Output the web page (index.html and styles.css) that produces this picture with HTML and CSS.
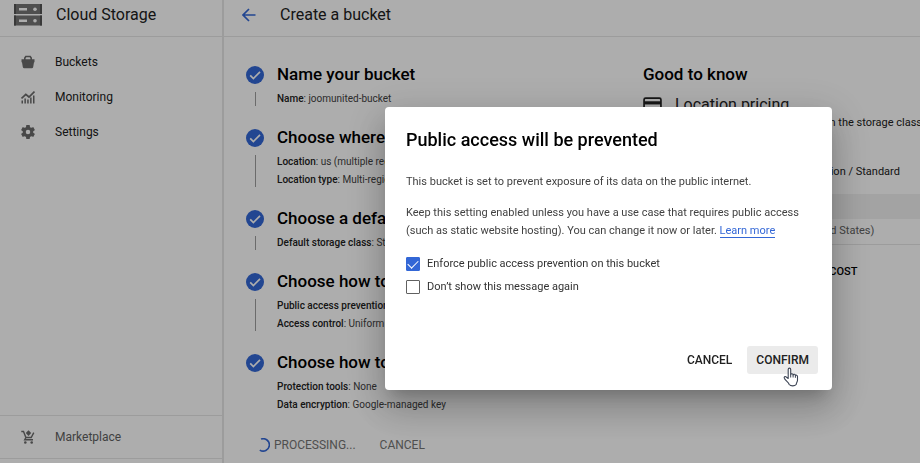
FILE: index.html
```html
<!DOCTYPE html>
<html lang="en">
<head>
    <meta charset="UTF-8">
    <meta name="viewport" content="width=device-width, initial-scale=1.0">
    <title>Create a bucket - Cloud Storage</title>
    <link rel="stylesheet" href="styles.css">
</head>
<body>
    <svg class="sprite" aria-hidden="true">
        <symbol id="check" viewBox="0 0 18 18">
            <circle cx="9" cy="9" r="9" fill="#3367d6"/>
            <path d="M4.2 9.3l3.2 3.2 6.6-6.6" fill="none" stroke="#fff" stroke-width="1.7"/>
        </symbol>
    </svg>

    <div class="layout">
        <aside class="sidebar">
            <div class="sidebar-header">
                <svg class="product-icon" viewBox="0 0 28 22">
                    <path fill="#757575" d="M0 0h28v10H0zM0 11.500h28v10H0z"/>
                    <path fill="#555" d="M0 0h2v10H0zM26 0h2v10h-2zM0 11.500h2v10H0zM26 11.500h2v10h-2z"/>
                    <path fill="#fff" d="M5 4h8v2.500H5zM5 15.500h8V18H5z"/>
                    <circle cx="21" cy="5.200" r="1.800" fill="#fff"/>
                    <circle cx="21" cy="16.700" r="1.800" fill="#fff"/>
                </svg>
                <span class="product-name">Cloud Storage</span>
            </div>
            <nav class="nav">
                <a href="#" class="nav-link">
                    <svg class="nav-icon" viewBox="0 0 14 14">
                        <path d="M.5 4.200h13v3h-.5l-.8 4.900a1.500 1.500 0 0 1-1.500 1.200H3.300a1.500 1.500 0 0 1-1.500-1.200L1 7.200H.5z"/>
                        <path d="M3.800 5V3l1-1.500h4.400l1 1.500v2" fill="none" stroke="#6b6b6b" stroke-width="1.600"/>
                    </svg>
                    Buckets
                </a>
                <a href="#" class="nav-link">
                    <svg class="nav-icon" viewBox="0 0 14 14">
                        <path d="M.5 10.500h1.500v3H.5zM3.400 8.500h1.500v5H3.400zM6.200 9.500h1.500v4H6.200zM9.100 7.500h1.500v6H9.100zM12 5.500h1.500v8H12z"/>
                        <path d="M.5 8.500l4.300-4.200 3.200 2.700 5.500-5.500" fill="none" stroke="#6b6b6b" stroke-width="1.700"/>
                    </svg>
                    Monitoring
                </a>
                <a href="#" class="nav-link">
                    <svg class="nav-icon" viewBox="2 2 20 20">
                        <path d="M19.430 12.980c.04-.32.07-.64.07-.98s-.03-.66-.07-.98l2.110-1.650c.19-.15.24-.42.12-.64l-2-3.460c-.12-.22-.39-.3-.61-.22l-2.490 1c-.52-.4-1.080-.73-1.690-.98l-.38-2.650A.49.49 0 0 0 14 2h-4c-.25 0-.46.18-.49.42l-.38 2.650c-.61.25-1.170.59-1.690.98l-2.490-1c-.23-.09-.49 0-.61.22l-2 3.460c-.13.22-.07.49.12.64l2.110 1.650c-.04.32-.07.65-.07.98s.03.66.07.98l-2.110 1.650c-.19.15-.24.42-.12.64l2 3.460c.12.22.39.3.61.22l2.490-1c.52.4 1.080.73 1.690.98l.38 2.650c.03.24.24.42.49.42h4c.25 0 .46-.18.49-.42l.38-2.650c.61-.25 1.170-.59 1.690-.98l2.490 1c.23.09.49 0 .61-.22l2-3.460c.12-.22.07-.49-.12-.64zM12 15.200a3.200 3.200 0 1 1 0-6.400 3.200 3.200 0 0 1 0 6.400z"/>
                    </svg>
                    Settings
                </a>
            </nav>
            <div class="sidebar-footer">
                <a href="#" class="nav-link muted">
                    <svg class="nav-icon" viewBox="0 0 14 14">
                        <path d="M.3 1.500h2.200l2.400 6h5.300l2.600-4.800" fill="none" stroke="#6b6b6b" stroke-width="1.400"/>
                        <path d="M4.900 7.500l-1.200 2.200h8.300" fill="none" stroke="#6b6b6b" stroke-width="1.400"/>
                        <path d="M7.500.3l2.700 2.700-2.700 3-2.700-3z"/>
                        <circle cx="4.300" cy="12.500" r="1.300"/>
                        <circle cx="10.700" cy="12.500" r="1.300"/>
                    </svg>
                    Marketplace
                </a>
            </div>
        </aside>

        <main class="main">
            <header class="page-header">
                <a href="#" class="back" aria-label="Back">
                    <svg viewBox="0 0 14 14" width="14" height="14">
                        <path d="M13.500 7H1.500M7 1L1 7l6 6" fill="none" stroke="#3367d6" stroke-width="1.700"/>
                    </svg>
                </a>
                <h1 class="page-title">Create a bucket</h1>
            </header>

            <div class="content">
                <div class="form">
                    <ol class="steps">
                        <li class="step">
                            <div class="step-marker"><svg class="step-check"><use href="#check"/></svg></div>
                            <div class="step-body">
                                <h2 class="step-title">Name your bucket</h2>
                                <p class="step-detail"><b>Name</b>: joomunited-bucket</p>
                            </div>
                        </li>
                        <li class="step">
                            <div class="step-marker"><svg class="step-check"><use href="#check"/></svg></div>
                            <div class="step-body">
                                <h2 class="step-title">Choose where to store your data</h2>
                                <p class="step-detail"><b>Location</b>: us (multiple regions in United States)</p>
                                <p class="step-detail"><b>Location type</b>: Multi-region</p>
                            </div>
                        </li>
                        <li class="step">
                            <div class="step-marker"><svg class="step-check"><use href="#check"/></svg></div>
                            <div class="step-body">
                                <h2 class="step-title">Choose a default storage class</h2>
                                <p class="step-detail"><b>Default storage class</b>: Standard</p>
                            </div>
                        </li>
                        <li class="step">
                            <div class="step-marker"><svg class="step-check"><use href="#check"/></svg></div>
                            <div class="step-body">
                                <h2 class="step-title">Choose how to control access</h2>
                                <p class="step-detail"><b>Public access prevention</b>: On</p>
                                <p class="step-detail"><b>Access control</b>: Uniform</p>
                            </div>
                        </li>
                        <li class="step">
                            <div class="step-marker"><svg class="step-check"><use href="#check"/></svg></div>
                            <div class="step-body">
                                <h2 class="step-title">Choose how to protect data</h2>
                                <p class="step-detail"><b>Protection tools</b>: None</p>
                                <p class="step-detail"><b>Data encryption</b>: Google-managed key</p>
                            </div>
                        </li>
                    </ol>
                    <div class="form-actions">
                        <button class="text-button" disabled>
                            <svg class="spinner" viewBox="0 0 14 14">
                                <path d="M5 1.100a6.200 6.200 0 1 1-1.200 11" fill="none" stroke="#3367d6" stroke-width="1.600"/>
                            </svg>
                            PROCESSING...
                        </button>
                        <button class="text-button" disabled>CANCEL</button>
                    </div>
                </div>

                <section class="info">
                    <h2 class="info-title">Good to know</h2>
                    <h3 class="info-subtitle">
                        <svg class="card-icon" viewBox="0 0 18 16">
                            <rect x="1" y="1" width="16" height="14" rx="1.500" fill="none" stroke="#212121" stroke-width="1.600"/>
                            <path d="M1 4h16v3H1z" fill="#212121"/>
                        </svg>
                        Location pricing
                    </h3>
                    <p class="info-text">Bucket storage rates vary depending on the storage class of your data</p>
                    <p class="info-text">Current bucket configuration: Multi-region / Standard</p>
                    <table class="price-table">
                        <thead>
                            <tr><th>Item</th></tr>
                        </thead>
                        <tbody>
                            <tr><td>Region: us (multiple regions in United States)</td></tr>
                        </tbody>
                    </table>
                    <h3 class="estimate">ESTIMATE FOR YOUR MONTHLY COST</h3>
                </section>
            </div>
        </main>
    </div>

    <div class="backdrop">
        <section class="dialog" role="dialog" aria-modal="true" aria-labelledby="dialogTitle">
            <h2 class="dialog-title" id="dialogTitle">Public access will be prevented</h2>
            <p class="dialog-text">This bucket is set to prevent exposure of its data on the public internet.</p>
            <p class="dialog-text">Keep this setting enabled unless you have a use case that requires public access (such as static website hosting). You can change it now or later. <a href="#" class="link">Learn more</a></p>
            <div class="options">
                <label class="option"><input type="checkbox" class="checkbox" checked> Enforce public access prevention on this bucket</label>
                <label class="option"><input type="checkbox" class="checkbox"> Don’t show this message again</label>
            </div>
            <div class="dialog-actions">
                <button class="dialog-button">CANCEL</button>
                <button class="dialog-button active">
                    CONFIRM
                    <svg class="pointer" viewBox="0 0 16 20" aria-hidden="true">
                        <path d="M5.200 11.500V2.600c0-2 2.500-2 2.500 0v5c.3-1.300 2.300-1.100 2.400.3.500-1 2.200-.7 2.300.6.600-.8 2.100-.4 2.100 1v3.800c0 1.300-1.300 2.700-1.300 4.200-1.500 1.800-5.500 1.800-7 0C5.500 15.300 3.200 14.200 1.500 11.600c-1-1.700.6-2.700 1.800-1.600z" fill="#fff" stroke="#3c4454" stroke-width="1.100" stroke-linejoin="round"/>
                        <path d="M7.700 7.500v3M10.100 8v2.500M12.400 8.500v2.300" stroke="#3c4454" stroke-width="1"/>
                    </svg>
                </button>
            </div>
        </section>
    </div>
</body>
</html>
```
FILE: styles.css
```css
:root {
    --primary-color: #3367d6;
    --icon-color: #6b6b6b;
    --border-color: #e6e6e6;
    --text-color: #212121;
}

* {
    box-sizing: border-box;
}

body,
h1,
h2,
h3,
p,
ol {
    margin: 0;
    padding: 0;
}

body {
    font-family: Roboto, sans-serif;
    font-size: 11px;
    line-height: 18px;
    color: var(--text-color);
    background-color: #fff;
    overflow: hidden;
}

button {
    border: none;
    background: none;
    font-family: inherit;
}

.sprite {
    display: none;
}

.layout {
    display: grid;
    grid-template-columns: 224px 1fr;
    height: 100vh;
}

/* Sidebar */
.sidebar {
    display: flex;
    flex-direction: column;
    border-right: 2px solid var(--border-color);
}

.sidebar-header {
    display: flex;
    align-items: center;
    gap: 14px;
    height: 37px;
    padding: 0 14px 6px;
    border-bottom: 1px solid var(--border-color);
}

.product-icon {
    width: 28px;
    height: 22px;
}

.product-name,
.page-title {
    font-size: 16px;
    font-weight: 400;
}

.nav {
    flex: 1;
    padding-top: 7px;
}

.nav-link {
    display: flex;
    align-items: center;
    gap: 20px;
    height: 35px;
    padding-left: 21px;
    font-size: 12px;
    color: var(--text-color);
    text-decoration: none;
}

.nav-icon {
    width: 14px;
    height: 14px;
    fill: var(--icon-color);
}

.muted {
    color: #616161;
}

.sidebar-footer {
    padding: 3px 0 4px;
    margin-bottom: 4px;
    border-top: 1px solid var(--border-color);
    border-bottom: 1px solid var(--border-color);
}

/* Page */
.main {
    min-width: 0;
}

.page-header {
    display: flex;
    align-items: center;
    gap: 24px;
    height: 37px;
    padding: 0 18px 6px;
    border-bottom: 1px solid var(--border-color);
}

.back {
    display: flex;
}

.content {
    display: grid;
    grid-template-columns: 397px 1fr;
    padding: 21px 0 0 22px;
}

.steps {
    list-style: none;
}

.step {
    display: flex;
    gap: 13px;
    padding-bottom: 13px;
}

.step-marker {
    display: flex;
    flex-direction: column;
    align-items: center;
    width: 18px;
    padding-top: 8px;
}

.step-check {
    width: 18px;
    height: 18px;
}

.step:not(:last-child) .step-marker::after {
    content: "";
    flex: 1;
    width: 1px;
    margin: 8px 0 2px;
    background-color: #9e9e9e;
}

.step-title,
.info-title {
    font-size: 17px;
    font-weight: 500;
    line-height: 32px;
    color: #000;
}

.step-detail {
    font-size: 10px;
    line-height: 18px;
    color: #424242;
}

.step-detail b {
    font-weight: 500;
    color: var(--text-color);
}

.form-actions {
    display: flex;
    gap: 24px;
    padding: 9px 0 0 10px;
}

.text-button {
    display: flex;
    align-items: center;
    gap: 4px;
    padding: 0;
    font-size: 12px;
    line-height: 18px;
    color: #757575;
}

.spinner {
    width: 14px;
    height: 14px;
}

.info {
    min-width: 0;
    overflow: hidden;
    white-space: nowrap;
}

.info-subtitle {
    display: flex;
    align-items: center;
    gap: 13px;
    padding-top: 6px;
    font-size: 16px;
    font-weight: 400;
    line-height: 18px;
}

.card-icon {
    width: 19px;
    height: 17px;
}

.info-text {
    margin-bottom: 31px;
}

.info-text + .info-text {
    margin-bottom: 13px;
}

.price-table {
    width: 100%;
    border-collapse: collapse;
    font-size: 11px;
    text-align: left;
}

.price-table th {
    height: 25px;
    padding: 0 12px;
    font-weight: 500;
    background-color: #f1f1f1;
}

.price-table td {
    height: 25px;
    padding: 0 12px;
    color: #616161;
    border-bottom: 1px solid var(--border-color);
}

.estimate {
    padding: 18px 0 0 24px;
    font-size: 11px;
    font-weight: 500;
    color: #000;
}

/* Dialog */
.backdrop {
    position: fixed;
    inset: 0;
    display: flex;
    justify-content: flex-end;
    align-items: flex-start;
    padding: 107px 88px 0 0;
    background-color: rgba(0, 0, 0, 0.32);
}

.dialog {
    width: 447px;
    padding: 21px 14px 16px 21px;
    border-radius: 4px;
    background-color: #fff;
    box-shadow: 0 11px 15px -7px rgba(0, 0, 0, 0.2), 0 20px 34px 3px rgba(0, 0, 0, 0.14), 0 9px 40px 8px rgba(0, 0, 0, 0.12);
}

.dialog-title {
    margin-bottom: 21px;
    font-size: 18px;
    font-weight: 500;
    line-height: 24px;
    color: #000;
}

.dialog-text {
    margin-bottom: 13px;
    color: #424242;
}

.link {
    color: var(--primary-color);
    text-decoration: none;
    border-bottom: 1px solid var(--primary-color);
}

.options {
    display: grid;
    gap: 5px;
    padding-top: 2px;
}

.option {
    display: flex;
    align-items: center;
    gap: 7px;
    color: #333;
}

.checkbox {
    appearance: none;
    display: flex;
    justify-content: center;
    width: 14px;
    height: 14px;
    margin: 0;
    border: 1px solid #616161;
    border-radius: 1px;
}

.checkbox:checked {
    border-color: var(--primary-color);
    background-color: var(--primary-color);
}

.checkbox:checked::before {
    content: "";
    width: 5px;
    height: 9px;
    border: solid #fff;
    border-width: 0 1px 1px 0;
    transform: rotate(45deg);
}

.dialog-actions {
    display: flex;
    justify-content: flex-end;
    gap: 6px;
    padding-top: 50px;
}

.dialog-button {
    position: relative;
    height: 28px;
    padding: 0 9px;
    border-radius: 3px;
    font-size: 12px;
    font-weight: 500;
    color: var(--text-color);
}

.active {
    background-color: #ebebeb;
}

.pointer {
    position: absolute;
    left: 36px;
    top: 21px;
    width: 16px;
    height: 20px;
}
```
